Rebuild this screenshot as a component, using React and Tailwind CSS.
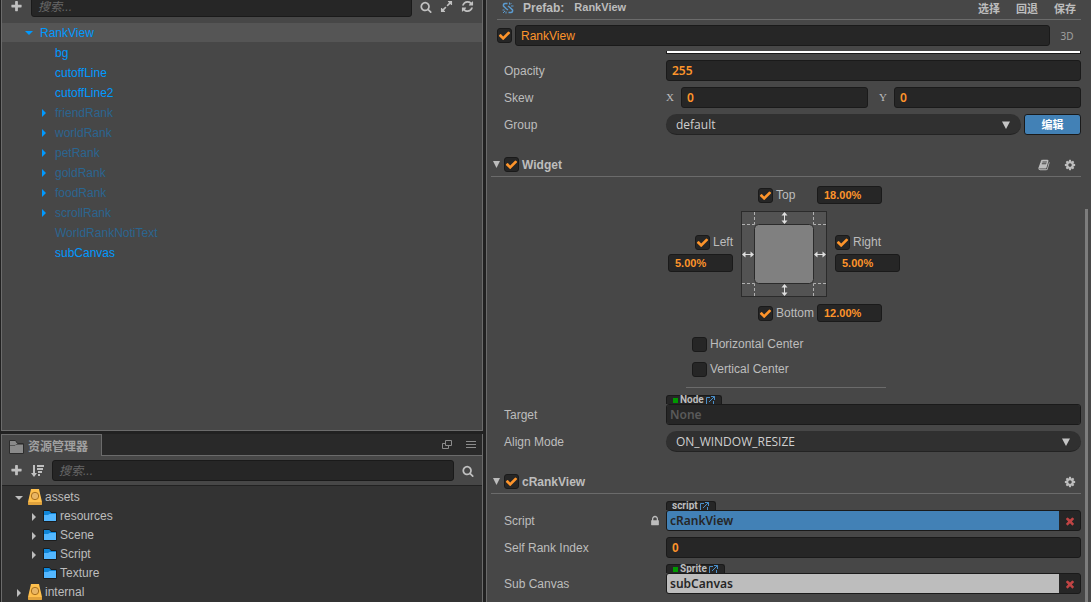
import React, { useState } from 'react';

const SANS = "font-['Liberation_Sans','Noto_Sans_CJK_SC',sans-serif]";
const NOTO = "font-['Noto_Sans','Noto_Sans_CJK_SC',sans-serif]";
const OPEN = "font-['Open_Sans','Noto_Sans_CJK_SC',sans-serif]";
const BOX = 'rounded-[3px] border border-[#1a1a1a] bg-[#262626]';

const PATHS = {
  plus: 'M1600 736v192q0 40-28 68t-68 28h-416v416q0 40-28 68t-68 28h-192q-40 0-68-28t-28-68v-416h-416q-40 0-68-28t-28-68v-192q0-40 28-68t68-28h416v-416q0-40 28-68t68-28h192q40 0 68 28t28 68v416h416q40 0 68 28t28 68z',
  search: 'M1216 832q0-185-131.5-316.5t-316.5-131.5-316.5 131.5-131.5 316.5 131.5 316.5 316.5 131.5 316.5-131.5 131.5-316.5zm512 832q0 52-38 90t-90 38q-54 0-90-38l-343-342q-179 124-399 124-143 0-273.5-55.5t-225-150-150-225-55.5-273.5 55.5-273.5 150-225 225-150 273.5-55.5 273.5 55.5 225 150 150 225 55.5 273.5q0 220-124 399l343 343q37 37 37 90z',
  expand: 'M883 1056q0 13-10 23l-332 332 144 144q19 19 19 45t-19 45-45 19h-448q-26 0-45-19t-19-45v-448q0-26 19-45t45-19 45 19l144 144 332-332q10-10 23-10t23 10l114 114q10 10 10 23zm781-864v448q0 26-19 45t-45 19-45-19l-144-144-332 332q-10 10-23 10t-23-10l-114-114q-10-10-10-23t10-23l332-332-144-144q-19-19-19-45t19-45 45-19h448q26 0 45 19t19 45z',
  refresh: 'M1639 1056q0 5-1 7-64 268-268 434.5t-478 166.5q-146 0-282.5-55t-243.5-157l-129 129q-19 19-45 19t-45-19-19-45v-448q0-26 19-45t45-19h448q26 0 45 19t19 45-19 45l-137 137q71 66 161 102t187 36q134 0 250-65t186-179q11-17 53-117 8-23 30-23h192q13 0 22.5 9.5t9.5 22.5zm25-800v448q0 26-19 45t-45 19h-448q-26 0-45-19t-19-45 19-45l138-138q-148-137-349-137-134 0-250 65t-186 179q-11 17-53 117-8 23-30 23h-199q-13 0-22.5-9.5t-9.5-22.5v-7q65-268 270-434.5t480-166.5q146 0 284 55.5t245 156.5l130-129q19-19 45-19t45 19 19 45z',
  cog: 'M1152 896q0-106-75-181t-181-75-181 75-75 181 75 181 181 75 181-75 75-181zm512-109v222q0 12-8 23t-20 13l-185 28q-19 54-39 91 35 50 107 138 10 12 10 25t-9 23q-27 37-99 108t-94 71q-12 0-26-9l-138-108q-44 23-91 38-16 136-29 186-7 28-36 28h-222q-14 0-24.5-8.5t-11.5-21.5l-28-184q-49-16-90-37l-141 107q-10 9-25 9-14 0-25-11-126-114-165-168-7-10-7-23 0-12 8-23 15-21 51-66.5t54-70.5q-27-50-41-99l-183-27q-13-2-21-12.5t-8-23.5v-222q0-12 8-23t19-13l186-28q14-46 39-92-40-57-107-138-10-12-10-24 0-10 9-23 26-36 98.5-107.5t94.5-71.5q13 0 26 10l138 107q44-23 91-38 16-136 29-186 7-28 36-28h222q14 0 24.5 8.5t11.5 21.5l28 184q49 16 90 37l142-107q9-9 24-9 13 0 25 10 129 119 165 170 7 8 7 22 0 12-8 23-15 21-51 66.5t-54 70.5q26 50 41 98l183 28q13 2 21 12.5t8 23.5z',
  check: 'M1671 566q0 40-28 68l-724 724-136 136q-28 28-68 28t-68-28l-136-136-362-362q-28-28-28-68t28-68l136-136q28-28 68-28t68 28l294 295 656-657q28-28 68-28t68 28l136 136q28 28 28 68z',
  times: 'M1490 1322q0 40-28 68l-136 136q-28 28-68 28t-68-28l-294-294-294 294q-28 28-68 28t-68-28l-136-136q-28-28-28-68t28-68l294-294-294-294q-28-28-28-68t28-68l136-136q28-28 68-28t68 28l294 294 294-294q28-28 68-28t68 28l136 136q28 28 28 68t-28 68l-294 294 294 294q28 28 28 68z',
  lock: 'M640 768h512v-192q0-106-75-181t-181-75-181 75-75 181v192zm832 96v576q0 40-28 68t-68 28h-960q-40 0-68-28t-28-68v-576q0-40 28-68t68-28h32v-192q0-184 132-316t316-132 316 132 132 316v192h32q40 0 68 28t28 68z',
  book: 'M1703 478q40 57 18 129l-275 906q-19 64-76.5 107.5t-122.5 43.5h-923q-77 0-148.5-53.5t-99.5-131.5q-24-67-2-127 0-4 3-27t4-37q1-8-3-21.5t-3-19.5q2-11 8-21t16.5-23.5 16.5-23.5q23-38 45-91.5t30-91.5q3-10 .5-30t-.5-28q3-11 17-28t17-23q21-36 42-92t25-90q1-9-2.5-32t.5-28q4-13 22-30.5t22-22.5q19-26 42.5-84.5t27.5-96.5q1-8-3-25.5t-2-26.5q2-8 9-18t18-23 17-21q8-12 16.5-30.5t15-35 16-36 19.5-32 26.5-23.5 36-11.5 47.500 5.500l-1 3q38-9 51-9h761q74 0 114 56t18 130l-274 906q-36 119-71.500 153.500t-128.500 34.500h-869q-27 0-38 15-11 16-1 43 24 70 144 70h923q29 0 56-15.500t35-41.500l300-987q7-22 5-57 38 15 59 43zm-1064 2q-4 13 2 22.500t20 9.500h608q13 0 25.500-9.500t16.500-22.500l21-64q4-13-2-22.500t-20-9.500h-608q-13 0-25.500 9.500t-16.500 22.500zm-83 256q-4 13 2 22.500t20 9.500h608q13 0 25.500-9.500t16.500-22.500l21-64q4-13-2-22.500t-20-9.500h-608q-13 0-25.500 9.500t-16.500 22.500z',
};

function Icon({ name, className = 'size-3' }) {
  return (
    <svg viewBox="0 0 1792 1792" fill="currentColor" aria-hidden="true" className={`shrink-0 ${className}`}>
      <path d={PATHS[name]} />
    </svg>
  );
}

function IconButton({ label, children }) {
  return (
    <button type="button" aria-label={label} className="grid size-[21px] shrink-0 place-items-center text-[#c0c0c0]">
      {children}
    </button>
  );
}

function Triangle({ open, className = '' }) {
  return (
    <svg viewBox="0 0 8 8" fill="currentColor" aria-hidden="true" className={`size-2 ${className}`}>
      <path d={open ? 'M0 2h8L4 6z' : 'M2 0v8l4-4z'} />
    </svg>
  );
}

function SortIcon() {
  return (
    <svg viewBox="0 0 13 13" fill="currentColor" aria-hidden="true" className="h-[13px] w-[13px]">
      <path d="M2 1h2v8h2L3 13 0 9h2zM6 1h7v2H6zM6 4h6v2H6zM7 7h4v2H7zM7 10h2v2H7z" />
    </svg>
  );
}

function ExternalIcon() {
  return (
    <svg viewBox="0 0 9 9" fill="none" stroke="#4a8fca" aria-hidden="true" className="size-[9px] shrink-0">
      <path d="M4 1.500H.5v7h7V5M5 .5h3.500v3.500M8.500.5 3 6" />
    </svg>
  );
}

function DatabaseIcon() {
  return (
    <svg viewBox="0 0 14 16" aria-hidden="true" className="h-4 w-[14px] shrink-0">
      <path d="M3 0h8l3 13v1.500q0 1.500-1.500 1.500h-11Q0 16 0 14.500V13z" fill="#ffc04d" />
      <path d="M0 13h14v1.500q0 1.500-1.500 1.500h-11Q0 16 0 14.500z" fill="#e0a23c" />
      <circle cx="7" cy="7" r="3.700" fill="#e8b565" stroke="#a9701c" />
    </svg>
  );
}

function FolderIcon() {
  return (
    <svg viewBox="0 0 14 12" aria-hidden="true" className="h-3 w-[14px] shrink-0">
      <path d="M.5.5h6l1.500 2h5.500v9H.5z" fill="#0f86d8" stroke="#1c1c1c" />
      <path d="M1 5h4l1.500-1H13v7H1z" fill="#53b7ff" />
    </svg>
  );
}

function TabFolderIcon() {
  return (
    <svg viewBox="0 0 15 14" aria-hidden="true" className="h-[14px] w-[15px]">
      <path d="M.5.500h6l2 3h6v10H.5z" fill="#8a8a8a" stroke="#2c2c2c" />
      <path d="M1 5.500h5l1-1h7" fill="none" stroke="#555" />
    </svg>
  );
}

function PrefabIcon() {
  return (
    <svg viewBox="0 0 12 12" fill="none" stroke="#5b9bd0" strokeWidth="1.500" aria-hidden="true" className="size-3">
      <path d="M5.500 1.500H3.200Q1 1.800 1.500 4L4 6.500l2 1.500M6.500 10.500h2.300q2.200-.3 1.700-2.500L8 5.500 6 4" />
      <path d="M8 2.500 9.500 1M9 4H11.500M3 9 1 11M.5 8H2.500M4 9.500V11.500M7.500.5V2.500" strokeWidth="1" />
    </svg>
  );
}

function Check({ id, label, checked = false }) {
  const [on, setOn] = useState(checked);
  return (
    <span className="grid size-[15px] shrink-0">
      <input
        id={id}
        type="checkbox"
        aria-label={label}
        checked={on}
        onChange={() => setOn(!on)}
        className={`col-start-1 row-start-1 size-[15px] appearance-none ${BOX}`}
      />
      {on && <Icon name="check" className="pointer-events-none col-start-1 row-start-1 size-[13px] place-self-center text-[#fd942b]" />}
    </span>
  );
}

function SearchBox({ label }) {
  return (
    <input
      type="text"
      aria-label={label}
      placeholder="搜索..."
      className={`h-[21px] min-w-0 flex-1 px-[6px] text-xs text-[#bdbdbd] placeholder:italic placeholder:text-[#666] ${BOX}`}
    />
  );
}

const NODES = [
  { name: 'bg' },
  { name: 'cutoffLine' },
  { name: 'cutoffLine2' },
  { name: 'friendRank', dim: true, parent: true },
  { name: 'worldRank', dim: true, parent: true },
  { name: 'petRank', dim: true, parent: true },
  { name: 'goldRank', dim: true, parent: true },
  { name: 'foodRank', dim: true, parent: true },
  { name: 'scrollRank', dim: true, parent: true },
  { name: 'WorldRankNotiText', dim: true },
  { name: 'subCanvas' },
];

function Hierarchy() {
  return (
    <section aria-label="Hierarchy" className="min-h-0 flex-1 overflow-hidden border-r border-b border-l border-[#6b6b6b] bg-[#474747]">
      <div className="-mt-1 mb-[6px] flex items-center px-1">
        <IconButton label="Add node"><Icon name="plus" className="size-[13px]" /></IconButton>
        <div className="ml-1 flex flex-1"><SearchBox label="Search nodes" /></div>
        <div className="ml-[3px] flex">
          <IconButton label="Search"><Icon name="search" /></IconButton>
          <IconButton label="Expand"><Icon name="expand" className="size-[13px]" /></IconButton>
          <IconButton label="Refresh"><Icon name="refresh" className="size-[13px]" /></IconButton>
        </div>
      </div>
      <ul className="text-xs leading-5 text-[#09f]">
        <li>
          <div className="flex h-[19px] items-center gap-1 bg-[#555] pl-5">
            <span className="grid w-[14px] place-items-center"><Triangle open /></span>
            RankView
          </div>
          <ul className="pt-px">
            {NODES.map((n) => (
              <li key={n.name} className="flex h-5 items-center gap-1 pl-[35px]">
                <span className="grid w-[14px] place-items-center">{n.parent && <Triangle />}</span>
                <span className={n.dim ? 'text-[#2b6590]' : ''}>{n.name}</span>
              </li>
            ))}
          </ul>
        </li>
      </ul>
    </section>
  );
}

function AssetRow({ name, nested, arrow = true, open, db }) {
  return (
    <li className={`flex h-[19px] items-center ${nested ? 'pl-[25px]' : 'pl-[10px]'}`}>
      <span className="mr-[2px] grid w-[14px] place-items-center pt-[2px]">{arrow && <Triangle open={open} />}</span>
      {db ? <DatabaseIcon /> : <FolderIcon />}
      <span className="ml-[3px]">{name}</span>
    </li>
  );
}

function Assets() {
  return (
    <section aria-label="资源管理器" className="flex h-[168px] shrink-0 flex-col overflow-hidden border-r border-l border-[#6b6b6b] bg-[#333]">
      <header className="flex h-[22px] shrink-0 bg-[#292929]">
        <h2 className="flex items-center gap-1 border-t border-r border-[#6b6b6b] bg-[#474747] pt-[2px] pr-[13px] pl-[7px] text-xs font-bold text-[#a0a0a0]">
          <TabFolderIcon />
          <span>资源管理器</span>
        </h2>
        <div className="flex flex-1 items-center justify-end gap-[14px] border-b border-[#6b6b6b] pr-[6px] text-[#8c8c8c]">
          <button type="button" aria-label="Pop out">
            <svg viewBox="0 0 10 9" fill="none" stroke="currentColor" className="block h-[9px] w-[10px]">
              <path d="M3.500.5h6v5h-6zM3.500 3.500h-3v5h6v-3" />
            </svg>
          </button>
          <button type="button" aria-label="Menu">
            <svg viewBox="0 0 10 8" fill="none" stroke="currentColor" className="block h-2 w-[10px]">
              <path d="M0 .5h10M0 3.500h10M0 6.500h10" />
            </svg>
          </button>
        </div>
      </header>
      <div className="flex h-[30px] shrink-0 items-center border-b border-[#222] bg-[#474747] px-1">
        <IconButton label="Add asset"><Icon name="plus" className="size-[13px]" /></IconButton>
        <IconButton label="Sort"><SortIcon /></IconButton>
        <div className="ml-1 flex flex-1"><SearchBox label="Search assets" /></div>
        <div className="ml-[3px]"><IconButton label="Search"><Icon name="search" /></IconButton></div>
      </div>
      <ul className="pt-px text-xs text-[#bdbdbd]">
        <AssetRow name="assets" open db />
        <AssetRow name="resources" nested />
        <AssetRow name="Scene" nested />
        <AssetRow name="Script" nested />
        <AssetRow name="Texture" nested arrow={false} />
        <AssetRow name="internal" db />
      </ul>
    </section>
  );
}

function Row({ id, label, lock, children }) {
  return (
    <div className="flex items-end">
      <div className="flex h-[21px] w-[162px] shrink-0 items-center justify-between pr-[5px]">
        <label htmlFor={id} className="text-xs">{label}</label>
        {lock && <Icon name="lock" className="size-3" />}
      </div>
      <div className="flex min-w-0 flex-1">{children}</div>
    </div>
  );
}

function TextBox({ id, label, value, font = SANS }) {
  return (
    <input
      id={id}
      type="text"
      aria-label={label}
      defaultValue={value}
      className={`block h-[21px] w-full min-w-0 px-[5px] text-xs text-[#fd942b] ${font} ${BOX}`}
    />
  );
}

function Dropdown({ id, value }) {
  return (
    <div className="grid min-w-0 flex-1 items-center">
      <select id={id} defaultValue={value} className={`col-start-1 row-start-1 h-[21px] w-full appearance-none rounded-full border-b border-[#232323] bg-[#303030] px-[10px] pt-px text-xs text-[#cfcfcf] ${OPEN}`}>
        <option>{value}</option>
      </select>
      <svg viewBox="0 0 8 8" fill="#c4c4c4" aria-hidden="true" className="pointer-events-none col-start-1 row-start-1 mr-[11px] size-2 justify-self-end">
        <path d="M0 .5h8L4 8z" />
      </svg>
    </div>
  );
}

function Reference({ id, type, square, value, placeholder, tone, removable }) {
  return (
    <div className="flex min-w-0 flex-1 flex-col items-start">
      <div className="flex h-[9px] items-center gap-[2px] rounded-t-[3px] border-x border-t border-[#1a1a1a] bg-[#262626] pr-[6px] pl-[5px] font-['Roboto',sans-serif] text-[10px] leading-none font-bold">
        {square && <span className="ml-px size-[5px] bg-[#090]" />}
        <span>{type}</span>
        <ExternalIcon />
      </div>
      <div className={`flex h-[21px] w-full overflow-hidden ${BOX}`}>
        <input
          id={id}
          type="text"
          readOnly
          defaultValue={value}
          placeholder={placeholder}
          className={`min-w-0 flex-1 px-[3px] text-xs font-semibold placeholder:text-[#5a5a5a] ${NOTO} ${tone}`}
        />
        {removable && (
          <button type="button" aria-label={`Clear ${value}`} className="grid w-[21px] place-items-center text-[#c04444]">
            <Icon name="times" className="size-3" />
          </button>
        )}
      </div>
    </div>
  );
}

function SectionHeader({ id, title, help }) {
  return (
    <header className="flex h-[25px] items-center gap-[3px] border-b border-[#6b6b6b] pt-px pr-[5px]">
      <button type="button" aria-label={`Collapse ${title}`} className="grid w-[10px] place-items-center">
        <svg viewBox="0 0 7 7" fill="currentColor" className="size-[7px]"><path d="M0 0h7L3.500 7z" /></svg>
      </button>
      <Check id={id} checked />
      <label htmlFor={id} className="text-xs font-bold">{title}</label>
      <div className="ml-auto flex gap-[14px]">
        {help && <button type="button" aria-label="Help"><Icon name="book" className="block size-3" /></button>}
        <button type="button" aria-label={`${title} settings`}><Icon name="cog" className="block size-3" /></button>
      </div>
    </header>
  );
}

function EdgeCheck({ id, label, checked = true }) {
  return (
    <div className="flex items-center gap-[3px]">
      <Check id={id} checked={checked} />
      <label htmlFor={id} className="text-xs leading-[18px]">{label}</label>
    </div>
  );
}

function EdgeValue({ label, value }) {
  return (
    <input
      type="text"
      aria-label={label}
      defaultValue={value}
      className={`block h-[18px] w-[65px] px-[6px] text-[11px] font-bold text-[#fd942b] ${SANS} ${BOX}`}
    />
  );
}

function WidgetDiagram() {
  return (
    <svg viewBox="0 0 86 86" aria-hidden="true" className="size-[86px]">
      <rect x=".5" y=".5" width="85" height="85" fill="#535353" stroke="#2b2b2b" />
      <path d="M13.500 1v12.500M72.500 1v12.500M13.500 85V72.500M72.500 85V72.500M1 13.500h12.500M1 72.500h12.500M85 13.500H72.500M85 72.500H72.500" stroke="#b0b0b0" strokeDasharray="3 2" />
      <rect x="13.500" y="13.500" width="59" height="59" rx="4" fill="#808080" stroke="#2b2b2b" />
      <g stroke="#e0e0e0">
        <path d="M43.500 3v8M43.500 75v8M3 43.500h8M75 43.500h8" />
      </g>
      <g fill="#e0e0e0">
        <path d="M43.500 1l3 3.500h-6zM43.500 13l3-3.500h-6zM43.500 73l3 3.500h-6zM43.500 85l3-3.500h-6zM1 43.500l3.500-3v6zM13 43.500l-3.500-3v6zM73 43.500l3.500-3v6zM85 43.500l-3.500-3v6z" />
      </g>
    </svg>
  );
}

function WidgetEditor() {
  return (
    <div className="pr-1">
      <div className="mx-auto mt-[9px] w-[232px]">
        <div className="flex items-center pl-[90px]">
          <div className="w-[59px]"><EdgeCheck id="top" label="Top" /></div>
          <EdgeValue label="Top margin" value="18.00%" />
        </div>
        <div className="my-[7px] flex items-center justify-between">
          <div className="flex flex-col items-end gap-[3px] pb-[3px]">
            <EdgeCheck id="left" label="Left" />
            <EdgeValue label="Left margin" value="5.00%" />
          </div>
          <WidgetDiagram />
          <div className="flex flex-col items-start gap-[3px] pb-[3px]">
            <EdgeCheck id="right" label="Right" />
            <EdgeValue label="Right margin" value="5.00%" />
          </div>
        </div>
        <div className="flex items-center pl-[90px]">
          <div className="w-[59px]"><EdgeCheck id="bottom" label="Bottom" /></div>
          <EdgeValue label="Bottom margin" value="12.00%" />
        </div>
        <div className="mt-[13px] mr-[14px] ml-[18px] flex flex-col gap-[7px] border-b border-[#6b6b6b] pb-[9px] pl-[6px]">
          <EdgeCheck id="hcenter" label="Horizontal Center" checked={false} />
          <EdgeCheck id="vcenter" label="Vertical Center" checked={false} />
        </div>
      </div>
    </div>
  );
}

function Axis({ id, label }) {
  return (
    <div className="flex items-center">
      <label htmlFor={id} className="w-[15px] shrink-0 font-['Liberation_Serif',serif] text-[11px]">{label}</label>
      <div className="min-w-0 flex-1"><TextBox id={id} value="0" font={`font-semibold ${NOTO}`} /></div>
    </div>
  );
}

function Inspector() {
  return (
    <main className="flex min-w-0 overflow-hidden border-l border-[#6b6b6b] bg-[#474747] text-[#bdbdbd]">
      <div className="min-w-0 flex-1 pl-1">
        <header className="ml-[6px] flex h-5 items-center border-b border-[#6b6b6b] pb-1 text-xs font-bold">
          <span className="ml-[5px]"><PrefabIcon /></span>
          <span className="ml-[9px]">Prefab:</span>
          <span className="ml-[10px] text-[11px]">RankView</span>
          <div className="ml-auto flex gap-4 pt-[3px] pr-[5px] text-[11px]">
            <button type="button">选择</button>
            <button type="button">回退</button>
            <button type="button">保存</button>
          </div>
        </header>
        <div className="mt-[5px] ml-[6px] flex items-center gap-[3px]">
          <Check id="active" label="Active" checked />
          <TextBox label="Node name" value="RankView" />
          <button type="button" className={`w-[28px] shrink-0 pt-px text-[10px] text-[#a0a0a0] ${NOTO}`}>3D</button>
        </div>
        <div className="pl-[13px]">
          <div className="mt-[5px] ml-[162px] h-[3px] border-x border-b border-[#1a1a1a] bg-white" />
          <div className="mt-[6px] flex flex-col gap-[6px]">
            <Row id="opacity" label="Opacity"><TextBox id="opacity" value="255" font={`font-semibold ${NOTO}`} /></Row>
            <Row id="skewx" label="Skew">
              <div className="grid flex-1 grid-cols-2 gap-[11px]">
                <Axis id="skewx" label="X" />
                <Axis id="skewy" label="Y" />
              </div>
            </Row>
            <Row id="group" label="Group">
              <Dropdown id="group" value="default" />
              <button type="button" className="ml-[3px] h-[21px] w-[57px] rounded-[3px] border border-[#1a1a1a] bg-[#4281b6] pt-px text-[11px] font-bold text-white">编辑</button>
            </Row>
          </div>
        </div>

        <section className="mt-[17px]">
          <SectionHeader id="widget" title="Widget" help />
          <WidgetEditor />
          <div className="mt-[7px] flex flex-col gap-[6px] pl-[13px]">
            <Row id="target" label="Target"><Reference id="target" type="Node" square placeholder="None" tone="bg-[#262626] text-[#bdbdbd]" /></Row>
            <Row id="align" label="Align Mode"><Dropdown id="align" value="ON_WINDOW_RESIZE" /></Row>
          </div>
        </section>

        <section className="mt-[17px]">
          <SectionHeader id="crank" title="cRankView" />
          <div className="mt-[7px] flex flex-col gap-[6px] pl-[13px]">
            <Row id="script" label="Script" lock><Reference id="script" type="script" value="cRankView" tone="bg-[#4281b6] text-[#262626]" removable /></Row>
            <Row id="self" label="Self Rank Index"><TextBox id="self" value="0" font={`font-bold ${SANS}`} /></Row>
            <Row id="sub" label="Sub Canvas"><Reference id="sub" type="Sprite" square value="subCanvas" tone="bg-[#bdbdbd] text-[#262626]" removable /></Row>
          </div>
        </section>
      </div>
      <div className="w-[10px] shrink-0 pt-[209px] pr-[3px] pl-1">
        <div className="h-full bg-[#7d7d7d]" />
      </div>
    </main>
  );
}

export default function App() {
  return (
    <div className={`grid h-screen grid-cols-[483fr_605fr] gap-[3px] overflow-hidden bg-[#212121] ${SANS}`}>
      <div className="flex min-h-0 min-w-0 flex-col gap-[3px] pl-px">
        <Hierarchy />
        <Assets />
      </div>
      <Inspector />
    </div>
  );
}
